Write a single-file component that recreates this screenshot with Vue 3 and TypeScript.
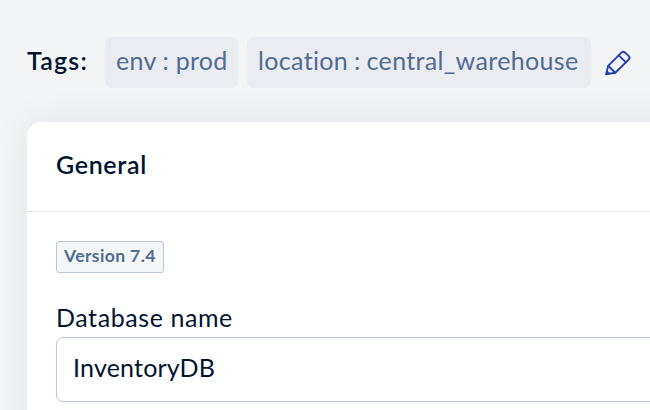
<script setup lang="ts">
import { ref } from 'vue'

interface Tag {
  key: string
  value: string
  size: string
}

const tags: Tag[] = [
  { key: 'env', value: 'prod', size: 'short' },
  { key: 'location', value: 'central_warehouse', size: 'long' },
]
const databaseName = ref('InventoryDB')
</script>

<template>
  <main class="page">
    <div class="tags">
      <span class="tags-label">Tags:</span>
      <span v-for="tag in tags" :key="tag.key" class="tag" :class="tag.size">{{ tag.key }} : {{ tag.value }}</span>
      <button class="edit" type="button">
        <svg viewBox="0 0 28 28" width="28" height="28" fill="none" stroke="currentColor" stroke-width="1.9" stroke-linejoin="round" stroke-linecap="round">
          <path d="M2.1 25.2 4.2 16.8 17.4 3.6Q19.3 1.7 21.2 3.6L24.8 7.2Q26.4 8.9 24.7 10.6L11.3 23.8Z" />
          <path d="M14.8 6.3 21.9 13.4M4.2 16.8 11.3 23.8" />
          <path d="M2.1 25.2 3 21.6 5.8 24.4Z" fill="currentColor" stroke-width="0.6" />
        </svg>
      </button>
    </div>
    <section class="card">
      <header class="card-header">General</header>
      <div class="card-body">
        <div class="version">Version 7.4</div>
        <div class="label">Database name</div>
        <div class="field">{{ databaseName }}</div>
      </div>
    </section>
  </main>
</template>

<style>
body {
  background: #f4f5f7;
  overflow: hidden;
}
</style>

<style scoped>
.page {
  box-sizing: border-box;
  width: 650px;
  height: 410px;
  overflow: hidden;
  padding: 37px 0 0 27px;
  font-family: Lato, "Noto Sans", sans-serif;
  font-size: 25px;
  font-variant-ligatures: none;
  line-height: 30px;
  color: #021430;
  white-space: nowrap;
}
.tags {
  display: flex;
  align-items: center;
  height: 51px;
}
.tags-label {
  width: 78px;
  padding-bottom: 5px;
  font-weight: 600;
  letter-spacing: 1.2px;
}
.tag {
  box-sizing: border-box;
  height: 51px;
  padding: 8px 0 0 11px;
  border-radius: 7px;
  background: #ebecf1;
  color: #506b94;
}
.tag.short {
  width: 133px;
  margin-right: 9px;
  letter-spacing: 0.25px;
}
.tag.long {
  width: 344px;
  letter-spacing: 0.34px;
  word-spacing: -0.8px;
}
.edit {
  display: flex;
  margin-left: 13px;
  padding: 0;
  border: 0;
  background: none;
  color: #2340b4;
}
.card {
  width: 700px;
  height: 340px;
  margin-top: 34px;
  border-radius: 14px;
  background: #fff;
  box-shadow: 0 0 36px rgba(20, 25, 35, 0.08);
}
.card-header {
  box-sizing: border-box;
  height: 90px;
  padding: 27px 29px 0;
  border-bottom: 1px solid #e8e9eb;
  font-weight: 600;
  letter-spacing: 0.65px;
}
.card-body {
  padding: 29px 29px 0;
}
.version {
  box-sizing: border-box;
  width: 108px;
  height: 32px;
  padding-left: 7px;
  border: 1px solid #bcc7db;
  border-radius: 3px;
  background: #f4f6f8;
  color: #506b94;
  font-size: 17.5px;
  font-weight: 700;
  line-height: 28px;
  letter-spacing: 0.4px;
}
.label {
  height: 30px;
  margin-top: 29px;
  letter-spacing: 0.58px;
}
.field {
  box-sizing: border-box;
  height: 65px;
  margin-top: 5px;
  padding: 14px 16px;
  border: 1px solid #bcc7db;
  border-radius: 7px;
  letter-spacing: 0.2px;
}
</style>
